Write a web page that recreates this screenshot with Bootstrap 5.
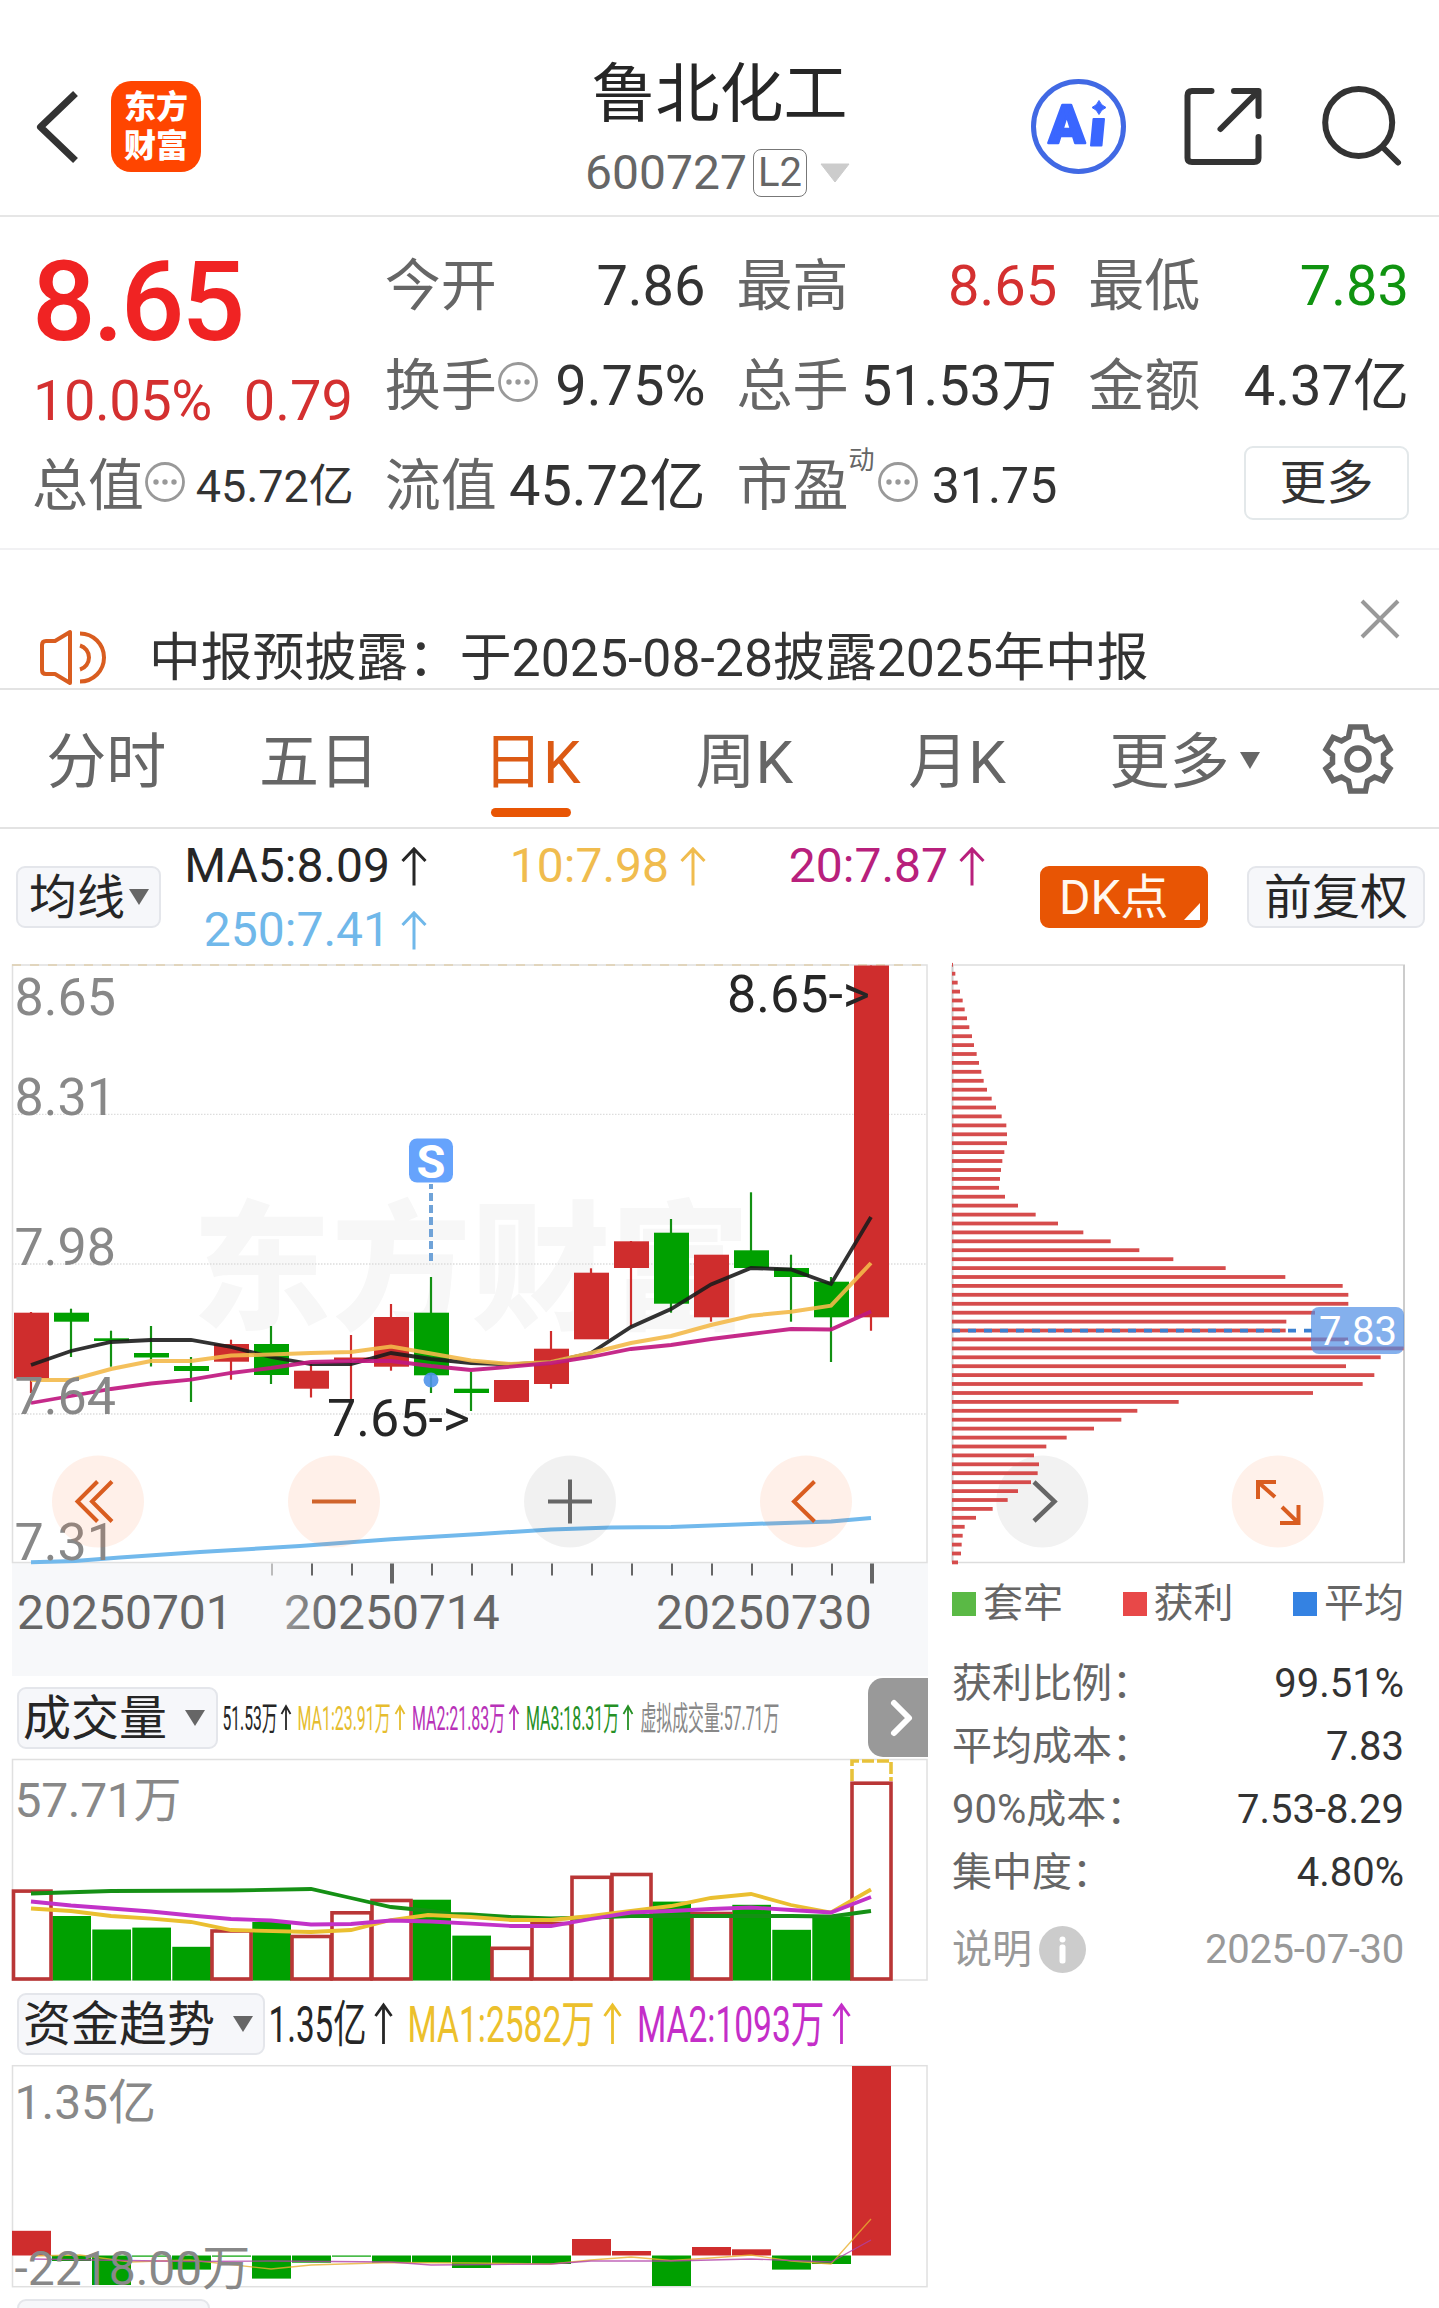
<!DOCTYPE html>
<html lang="zh-CN">
<head>
<meta charset="utf-8">
<meta name="viewport" content="width=device-width, initial-scale=1">
<title>鲁北化工 600727</title>
<link href="https://cdn.jsdelivr.net/npm/bootstrap@5.3.0/dist/css/bootstrap.min.css" rel="stylesheet">
<style>
  :root { --up:#cf2d2d; --down:#00a000; --ink:#333; --dim:#666; --brand:#e85504; }
  body { font-family: Roboto, "Noto Sans CJK SC", sans-serif; color: var(--ink); background:#fff; width:1439px; height:2308px; overflow:hidden; }
  svg { display:block; flex:none; overflow:visible; }
  .topbar { height:217px; padding:38px 38px 0 30px; border-bottom:2px solid #e6e6e6; }
  .topbar .side { flex:1 1 0; }
  .brand-tile { width:90px; height:91px; border-radius:20px; background:#ff4500; color:#fff; font-size:32px; line-height:38.5px; font-weight:900; margin-left:30px; padding-top:7px; text-align:center; }
  .stock-title { font-size:64px; line-height:84px; color:#262626; padding:8px 0 0 8px; }
  .stock-code { font-size:48px; line-height:72px; color:var(--dim); height:72px; padding-left:4px; }
  .lv { font-size:40px; line-height:46px; height:48px; width:54px; border:1.5px solid #777; border-radius:8px; margin:0 13px 0 6px; text-align:center; }
  .quotes { height:333px; padding:19px 31px 0 32px; border-bottom:2px solid #f1f1f3; display:grid; grid-template-columns:repeat(4,1fr); column-gap:32px; align-items:start; }
  .qrow { height:100px; font-size:56px; line-height:101px; white-space:nowrap; }
  .qrow .lb { color:var(--dim); }
  .qrow > span:last-child { margin-right:-1px; }
  .price { font-size:112px; line-height:132px; height:130px; font-weight:500; color:#f02323; letter-spacing:-3px; }
  .chg { font-size:56px; line-height:71px; height:70px; color:#d43030; gap:32px; padding-left:1px; }
  .chg span:first-child { letter-spacing:-.5px; }
  .tip { margin:-9px 0 0 3px; }
  .more-btn { width:165px; height:74px; border:2px solid #e3e8ea; border-radius:9px; font-size:47px; line-height:70px; text-align:center; margin:-6px -1px 0 0; }
  .notice { height:140px; padding:53px 39px 0 38px; border-bottom:2px solid #e3e3e3; font-size:51.8px; line-height:112px; }
  .tabs6 { height:139px; border-bottom:2px solid #e3e3e3; font-size:60px; line-height:145px; color:var(--dim); }
  .tabs6 .tb { width:212.7px; text-align:center; position:relative; }
  .tabs6 .on { color:#dc5a14; }
  .tabs6 .on::after { content:""; position:absolute; left:66px; top:118px; width:80px; height:9px; border-radius:5px; background:var(--brand); }
  .tabs6 .tb-more { width:262px; padding-left:46px; gap:11px; }
  .tabs6 .gear { margin-top:34px; margin-left:-2px; }
  .mabar { height:135px; padding:0 14px 0 16px; font-size:48px; }
  .chip { height:62px; border:2px solid #e4e6eb; border-radius:9px; background:#f6f7fa; color:#262626; font-size:48px; line-height:59px; white-space:nowrap; }
  .mabar .chip { margin-top:37px; }
  .chip-dk { width:168px; background:var(--brand); border-color:var(--brand); color:#fff8f0; position:relative; padding-left:17px; margin-left:16px; }
  .chip-dk::after { content:""; position:absolute; right:6px; bottom:6px; border-style:solid; border-width:0 0 17px 16px; border-color:transparent transparent #fff; }
  .malist { display:grid; grid-template-columns:243px 279px 279px; grid-auto-rows:64px; align-content:start; line-height:64px; width:840px; margin-left:23px; padding-top:5px; }
  .malist .m { display:flex; align-items:center; justify-content:flex-end; gap:11px; height:64px; }
  .plot-l { width:928px; }
  .plot-r { width:511px; padding:0 35px 0 24px; }
  .indbar { padding:0 0 0 17px; }
  .indbar .chip { padding-left:4px; }
  .indbar .chip svg { margin-left:18px; }
  .pager { width:60px; height:79px; background:#999; border-radius:15px 0 0 15px; margin-top:1px; }
  .sw { width:24px; height:24px; margin-right:7px; }
  .legend { font-size:40px; line-height:82px; height:81px; margin-bottom:8px; color:var(--dim); }
  .cost { font-size:40px; line-height:63px; height:63px; }
  .cost .lb { color:var(--dim); }
  .foot { font-size:40px; line-height:91px; height:91px; color:#999; }
  .foot svg { margin-left:7px; }
  text { white-space:pre; }
</style>
</head>
<body>

<header class="topbar d-flex align-items-center">
  <div class="side d-flex align-items-center">
    <svg width="51" height="92" viewBox="31 81 51 92" fill="none" stroke="#333" stroke-width="7" stroke-linejoin="round"><path d="M76.500 93.500 41.500 127 76.500 160.500"/></svg>
    <div class="brand-tile">东方<br>财富</div>
  </div>
  <div class="text-center">
    <div class="stock-title">鲁北化工</div>
    <div class="stock-code d-flex align-items-center justify-content-center">600727<span class="lv">L2</span><svg width="30" height="20"><path d="M1 1H29L15 19Z" fill="#ccc" stroke="#ccc" stroke-linejoin="round"/></svg></div>
  </div>
  <div class="side d-flex align-items-center justify-content-end">
    <svg width="97" height="97" viewBox="1031 78.500 97 97">
      <circle cx="1078.500" cy="127" r="45" fill="none" stroke="#4169e4" stroke-width="5"/>
      <g fill="#3a66ff" stroke="#3a66ff" font-family="Roboto" font-weight="900" stroke-linejoin="round">
        <text x="1048.500" y="143.500" font-size="54" stroke-width="2.500" textLength="36.500" lengthAdjust="spacingAndGlyphs">A</text>
        <path d="M1093.500 119.500H1104L1101.500 146H1091Z" stroke-width="2"/>
        <path d="M1099 101Q1101 106 1106 108Q1101 110 1099 115Q1097 110 1092 108Q1097 106 1099 101Z" stroke-width="1"/>
      </g>
    </svg>
    <svg class="ms-5" width="78" height="78" viewBox="1176 88 78 78" fill="none" stroke="#333" stroke-width="6" stroke-linecap="round" stroke-linejoin="round"><path d="M1211.500 91H1192Q1187.500 91 1187.500 95.500V158Q1187.500 162 1192 162H1254Q1258.500 162 1258.500 158V137M1234 91H1258.500V116M1257 92.500 1220.500 129"/></svg>
    <svg class="ms-5" width="99" height="80" viewBox="1302 87 99 80" fill="none" stroke="#333" stroke-width="6" stroke-linecap="round"><circle cx="1358.700" cy="122.500" r="33.500"/><path d="M1383.500 148 1398 162.500"/></svg>
  </div>
</header>

<section class="quotes">
  <div>
    <div class="price">8.65</div>
    <div class="chg d-flex"><span>10.05%</span><span>0.79</span></div>
    <div class="qrow d-flex align-items-center"><span class="lb">总值</span><svg class="tip ms-0" width="42" height="40"><use href="#dots" x="1"/></svg><span class="ms-auto" style="font-size:45px">45.72亿</span></div>
  </div>
  <div>
    <div class="qrow d-flex justify-content-between"><span class="lb">今开</span><span>7.86</span></div>
    <div class="qrow d-flex align-items-center"><span class="lb">换手</span><svg class="tip ms-0" width="42" height="40"><use href="#dots" x="1"/></svg><span class="ms-auto">9.75%</span></div>
    <div class="qrow d-flex justify-content-between"><span class="lb">流值</span><span>45.72亿</span></div>
  </div>
  <div>
    <div class="qrow d-flex justify-content-between"><span class="lb">最高</span><span style="color:#d43030">8.65</span></div>
    <div class="qrow d-flex justify-content-between"><span class="lb">总手</span><span>51.53万</span></div>
    <div class="qrow d-flex align-items-center"><span class="lb">市盈</span><span class="lb" style="font-size:26px;line-height:26px;margin-top:-52px">动</span><svg class="tip" width="40" height="40"><use href="#dots"/></svg><span class="ms-auto" style="font-size:50px">31.75</span></div>
  </div>
  <div>
    <div class="qrow d-flex justify-content-between"><span class="lb">最低</span><span style="color:#109310">7.83</span></div>
    <div class="qrow d-flex justify-content-between"><span class="lb">金额</span><span>4.37亿</span></div>
    <div class="qrow d-flex align-items-center justify-content-end"><div class="more-btn">更多</div></div>
  </div>
</section>

<section class="notice d-flex">
  <svg width="70" height="58" viewBox="38 628 70 58" style="margin-top:25px" fill="none" stroke="#d95d20" stroke-width="4"><path d="M70 632V683L55 674H46Q42 674 42 670V645Q42 641 46 641H55Z" stroke-linejoin="round"/><path d="M80 645.500A12.500 12.500 0 0 1 80 669.500M80 633.500A24 24 0 0 1 80 681.500"/></svg>
  <span style="margin-left:41px">中报预披露：于2025-08-28披露2025年中报</span>
  <svg class="ms-auto" width="38" height="38" style="margin-top:-3px" fill="none" stroke="#999" stroke-width="4"><path d="M0 1 36 37M36 1 0 37"/></svg>
</section>

<nav class="tabs6 d-flex align-items-start">
  <div class="tb">分时</div><div class="tb">五日</div><div class="tb on">日K</div><div class="tb">周K</div><div class="tb">月K</div>
  <div class="tb-more d-flex align-items-center"><span>更多</span><svg width="20" height="17" class="mb-1"><path d="M0 0H20L10 17Z" fill="#666"/></svg></div>
  <svg class="gear" width="70" height="70" viewBox="-35 -35 70 70" fill="none" stroke="#666" stroke-width="5.500"><path d="M-7.500 -32H7.500L9.500 -22 16.500 -18 25 -21.500 32 -9.500 25.500 -4V4L32 9.500 25 21.500 16.500 18 9.500 22 7.500 32H-7.500L-9.500 22-16.500 18-25 21.500-32 9.500-25.500 4V-4L-32 -9.500-25 -21.500-16.500 -18-9.500 -22Z"/><circle r="11"/></svg>
</nav>

<section class="mabar d-flex">
  <div class="chip d-flex align-items-center" style="width:145px;padding-left:11px">均线<svg width="20" height="16" style="margin-left:4px"><path d="M0 0H20L10 16Z" fill="#666"/></svg></div>
  <div class="malist">
    <div class="m" style="color:#262626">MA5:8.09<svg width="26" height="40"><use href="#up"/></svg></div>
    <div class="m" style="color:#f0bc4e">10:7.98<svg width="26" height="40"><use href="#up"/></svg></div>
    <div class="m" style="color:#b8207c">20:7.87<svg width="26" height="40"><use href="#up"/></svg></div>
    <div class="m" style="color:#70b8ea">250:7.41<svg width="26" height="40"><use href="#up"/></svg></div>
  </div>
  <div class="chip chip-dk">DK点</div>
  <div class="chip ms-auto" style="width:178px;padding-left:15px">前复权</div>
</section>

<main class="d-flex">
  <div class="plot-l">
    <svg id="kline" width="928" height="713" viewBox="0 964 928 713"></svg>
    <div class="indbar d-flex align-items-start" style="height:81px">
      <div class="chip d-flex align-items-center" style="width:201px;margin-top:10px">成交量<svg width="20" height="16"><path d="M0 0H20L10 16Z" fill="#666"/></svg></div>
      <svg width="640" height="81" viewBox="218 1677 640 81" font-size="33">
        <g fill="#262626" color="#262626"><text transform="translate(222.500 1729.500) scale(.475 1)">51.53万</text><path d="M286 1730V1706M281.500 1714 286 1706 290.500 1714" fill="none" stroke="currentColor" stroke-width="1.800"/></g>
        <g fill="#e6bd2e" color="#e6bd2e"><text transform="translate(297.500 1729.500) scale(.483 1)">MA1:23.91万</text><path d="M400 1730V1706M395.500 1714 400 1706 404.500 1714" fill="none" stroke="currentColor" stroke-width="1.800"/></g>
        <g fill="#b832b8" color="#b832b8"><text transform="translate(412 1729.500) scale(.483 1)">MA2:21.83万</text><path d="M514 1730V1706M509.500 1714 514 1706 518.500 1714" fill="none" stroke="currentColor" stroke-width="1.800"/></g>
        <g fill="#259025" color="#259025"><text transform="translate(526 1729.500) scale(.483 1)">MA3:18.31万</text><path d="M628 1730V1706M623.500 1714 628 1706 632.500 1714" fill="none" stroke="currentColor" stroke-width="1.800"/></g>
        <text transform="translate(640.500 1729.500) scale(.481 1)" fill="#888">虚拟成交量:57.71万</text>
      </svg>
      <div class="pager ms-auto d-flex align-items-center justify-content-center"><svg class="ms-2" width="22" height="38" viewBox="0 0 22 38" fill="none" stroke="#fff" stroke-width="6" stroke-linecap="round" stroke-linejoin="round"><path d="M3 4 18 19 3 34"/></svg></div>
    </div>
    <svg id="volume" width="928" height="224" viewBox="0 1758 928 224"></svg>
    <div class="indbar d-flex align-items-start" style="height:82px">
      <div class="chip d-flex align-items-center" style="width:248px;margin-top:11px">资金趋势<svg width="20" height="16"><path d="M0 0H20L10 16Z" fill="#666"/></svg></div>
      <svg width="640" height="82" viewBox="265 1982 640 82" font-size="50">
        <g fill="#262626" color="#262626"><text transform="translate(268.500 2041.500) scale(.665 1)">1.35亿</text><path d="M383.500 2044V2005M375.500 2016 383.500 2005 391.500 2016" fill="none" stroke="currentColor" stroke-width="2.800"/></g>
        <g fill="#ecc02c" color="#ecc02c"><text transform="translate(407.500 2041.500) scale(.671 1)">MA1:2582万</text><path d="M612.500 2044V2005M604.500 2016 612.500 2005 620.500 2016" fill="none" stroke="currentColor" stroke-width="2.800"/></g>
        <g fill="#c42ec8" color="#c42ec8"><text transform="translate(637 2041.500) scale(.671 1)">MA2:1093万</text><path d="M841.500 2044V2005M833.500 2016 841.500 2005 849.500 2016" fill="none" stroke="currentColor" stroke-width="2.800"/></g>
      </svg>
    </div>
    <svg id="flow" width="928" height="224" viewBox="0 2064 928 224"></svg>
    <div class="indbar" style="height:20px;overflow:hidden"><div class="chip" style="width:193px;margin-top:11px"></div></div>
  </div>

  <aside class="plot-r">
    <svg id="chips" width="452" height="599" viewBox="952 964 452 599"></svg>
    <div class="legend d-flex justify-content-between align-items-center">
      <div class="d-flex align-items-center"><i class="sw" style="background:#5ab945"></i>套牢</div>
      <div class="d-flex align-items-center"><i class="sw" style="background:#e84848"></i>获利</div>
      <div class="d-flex align-items-center"><i class="sw" style="background:#3482e2"></i>平均</div>
    </div>
    <div class="cost d-flex justify-content-between"><span class="lb">获利比例：</span><span>99.51%</span></div>
    <div class="cost d-flex justify-content-between"><span class="lb">平均成本：</span><span>7.83</span></div>
    <div class="cost d-flex justify-content-between"><span class="lb">90%成本：</span><span>7.53-8.29</span></div>
    <div class="cost d-flex justify-content-between"><span class="lb">集中度：</span><span>4.80%</span></div>
    <div class="foot d-flex align-items-center"><span>说明</span><svg width="47" height="47"><circle cx="23.500" cy="23.500" r="23.500" fill="#ccc"/><circle cx="23.500" cy="13.500" r="3" fill="#fff"/><rect x="20.500" y="18.500" width="6" height="19" rx="2.500" fill="#fff"/></svg><span class="ms-auto" style="letter-spacing:-.3px">2025-07-30</span></div>
  </aside>
</main>

<svg width="0" height="0" style="position:absolute">
  <symbol id="dots" viewBox="0 0 40 40" width="40" height="40"><circle cx="20" cy="20" r="18.500" fill="none" stroke="#999" stroke-width="2.800"/><g fill="#999"><circle cx="11" cy="20" r="2.700"/><circle cx="20" cy="20" r="2.700"/><circle cx="29" cy="20" r="2.700"/></g></symbol>
  <symbol id="up" viewBox="0 0 26 40"><path d="M13 39.500V3M1.500 15 13 3 24.500 15" fill="none" stroke="currentColor" stroke-width="3"/></symbol>
</svg>

<script src="https://cdn.jsdelivr.net/npm/bootstrap@5.3.0/dist/js/bootstrap.bundle.min.js"></script>
<script>
const UP = '#cf2d2d', DOWN = '#00a000', STEP = 40, X0 = 31;
const line = (pts, color, w, op = 1) => `<polyline points="${pts.map(p => p.join()).join(' ')}" fill="none" stroke="${color}" stroke-width="${w}" stroke-opacity="${op}"/>`;
const series = ys => ys.map((y, i) => [X0 + STEP * i, y]);
const label = (x, y, s, size = 48, fill = '#888', extra = '') => `<text x="${x}" y="${y}" font-size="${size}" fill="${fill}" ${extra}>${s}</text>`;
const frame = (x, y, w, h) => `<rect x="${x}" y="${y}" width="${w}" height="${h}" fill="none" stroke="#e0e0e0" stroke-width="1.5"/>`;

/* candles: direction, body top, body bottom, wick top, wick bottom */
const candles = [
  [1,1312.7,1378.5,1312,1393],[0,1312.7,1321.7,1308.7,1357],[0,1338.3,1341,1330.7,1366.7],[0,1353,1357.5,1326,1366.5],
  [0,1366,1371,1357,1402],[1,1344,1361.7,1339.7,1379.7],[0,1344,1375,1326,1384],[1,1370.7,1388.7,1363,1397.5],
  [1,1357.5,1360,1335,1400],[1,1317,1366.7,1304,1370.7],[0,1312.7,1375.3,1277,1393],[0,1388.7,1393,1371.7,1411],
  [1,1380,1402,1380,1402],[1,1348.7,1384,1331,1388.7],[1,1272.7,1339.3,1268.3,1339],[1,1241.3,1268,1241,1326.7],
  [0,1232.7,1303.7,1219,1312.7],[1,1254.7,1317.3,1255,1321.7],[0,1250.3,1268,1192.3,1268],[0,1268,1277,1254.7,1321.7],
  [0,1281.7,1317.3,1277,1362],[1,965.5,1317.3,965.5,1330.7]];
let k = `<rect x="12" y="1563" width="916" height="113" fill="#f7f8fa"/>` + frame(12.5, 965, 914.5, 597.5);
k += `<text x="192" y="1318" font-size="139" font-weight="900" fill="#f7f7f7" textLength="558">东方财富</text>`;
k += `<path d="M12 965H927" stroke="#e0cfb0" stroke-width="1.500" stroke-dasharray="9 9"/>`;
k += [1114.3,1264,1414].map(y => `<path d="M12 ${y}H927" stroke="#ddd" stroke-width="1.300" stroke-dasharray="1.500 1.500"/>`).join('');
candles.forEach(([u, a, b, t, l], i) => {
  const x = X0 + STEP * i, c = u ? UP : DOWN;
  k += `<path d="M${x} ${t}V${l}" stroke="${u ? UP : '#129012'}" stroke-width="2.200"/><rect x="${x - 17}" y="${a}" width="35" height="${b - a}" fill="${c}"/>`;
});
k += line(series([1365,1351,1342,1340,1340,1347,1357,1364,1364,1353,1359,1363,1364.5,1362,1353,1327,1309,1284.5,1268,1269.5,1284,1217]), '#1c1c1c', 3.8, .9);
k += line(series([1380,1380,1369,1361,1361,1355.5,1354.5,1353,1352,1346.5,1353.5,1360.5,1364,1362,1353,1343,1336,1325,1315.7,1311.7,1305.7,1263]), '#f3b94a', 4, .9);
k += line(series([1403,1396,1389,1383.5,1379.7,1373,1368,1362,1361,1361,1366,1370,1366.7,1363,1357,1349,1345,1339,1334,1329,1329.5,1311.5]), '#c01880', 3.8, .92);
k += line([[31,1562.3],[75,1561],[120,1557.5],[200,1552],[300,1546],[391,1539.3],[480,1534],[551,1529.5],[611,1527.5],[671,1527],[751,1524],[831,1521.5],[871,1518]], '#72b9ec', 4);
k += `<path d="M431 1184V1263" stroke="#70a3d8" stroke-width="4" stroke-dasharray="8 4" stroke-dashoffset="3"/><rect x="409" y="1138.500" width="44" height="44" rx="8" fill="#66a3fc"/>` + label(431, 1177.5, 'S', 47, '#fff', 'font-weight="700" text-anchor="middle"');
k += `<circle cx="431" cy="1380" r="7.500" fill="#4f94ea" fill-opacity=".9"/>`;
k += label(14.5,1014.5,'8.65',52) + label(14.5,1114.5,'8.31',52) + label(14.5,1264.5,'7.98',52) + label(14.5,1414,'7.64',52) + label(14.5,1560,'7.31',52);
k += label(727,1012.3,'8.65-&gt;',52,'#262626') + label(327,1436,'7.65-&gt;',52,'#262626');
const knob = (x, bg, stroke, d) => `<circle cx="${x}" cy="1501.500" r="46" fill="${bg}"/><path d="${d}" fill="none" stroke="${stroke}" stroke-width="4"/>`;
k += knob(98, 'rgba(255,110,40,.1)', '#d95d20', 'M97.500 1481.500 77.500 1501.500 97.500 1521.500M112 1481.500 92 1501.500 112 1521.500');
k += knob(334, 'rgba(255,110,40,.1)', '#d0642c', 'M312 1501.500H356');
k += knob(570, 'rgba(0,0,0,.053)', '#666', 'M548 1501.500H592M570 1479.500V1523.500');
k += knob(806, 'rgba(255,110,40,.1)', '#d95d20', 'M814.500 1481.500 794 1501.500 814.500 1521.500');
for (let x = 272; x <= 872; x += 40) {
  const big = x === 392 || x === 872;
  k += `<rect x="${x - (big ? 2 : 1)}" y="1563.500" width="${big ? 4 : 2}" height="${big ? 20 : 12}" fill="${x === 272 ? '#bbb' : '#666'}"/>`;
}
k += `<linearGradient id="fade" gradientUnits="userSpaceOnUse" x1="284" y1="0" x2="330" y2="0"><stop offset="0" stop-color="#999"/><stop offset="1" stop-color="#666"/></linearGradient>`;
k += label(17,1629,'20250701',48,'#666') + label(284,1629,'20250714',48,'url(#fade)') + label(656,1629,'20250730',48,'#666');
document.getElementById('kline').innerHTML = k;

/* volume bars: direction, top */
const vol = [[1,1889.6],[0,1916],[0,1929.5],[0,1927.6],[0,1946.8],[1,1929.5],[0,1922],[1,1935],[1,1911.3],[1,1899],[0,1899.7],[0,1935.6],[1,1946.8],[1,1922],[1,1875.8],[1,1873],[0,1901.6],[1,1912],[0,1904.8],[0,1929.8],[0,1916.4],[1,1781.7]];
let v = frame(12.5, 1759.5, 914.5, 220.5);
vol.forEach(([u, t], i) => { if (!u) v += `<rect x="${12.3 + 40 * i}" y="${t}" width="38.700" height="${1980.500 - t}" fill="${DOWN}"/>`; });
vol.forEach(([u, t], i) => {
  if (!u) return;
  const x = i ? 12 + 40 * i : 13.5;
  v += `<rect x="${x}" y="${t + 1.5}" width="${51 + 40 * i - x}" height="${1977.500 - t}" fill="#fff" stroke="#b93636" stroke-width="3.600"/>`;
});
v += `<path d="M852 1781V1761H891V1781" fill="none" stroke="#e8c23a" stroke-width="3.600" stroke-dasharray="12 3"/>`;
v += line([[31,1893.5],[111,1891],[231,1890.5],[311,1889],[351,1898],[391,1907],[431,1911],[451,1914],[471,1914.5],[511,1917],[551,1918.5],[591,1917.5],[631,1916],[791,1916],[831,1916.5],[871,1911]], '#159015', 3.8);
v += line([[31,1908.5],[71,1911],[111,1916],[151,1918.7],[191,1922],[231,1930],[311,1932],[351,1930],[391,1920],[428,1915],[471,1917],[511,1920],[551,1920],[591,1916],[631,1911],[671,1906],[711,1898],[751,1894],[791,1905],[831,1912.5],[871,1889.5]], '#eabf30', 3.8);
v += line([[31,1901.5],[71,1905.5],[151,1911.5],[191,1915.5],[231,1919],[271,1920.5],[311,1924.5],[351,1924],[391,1920.5],[431,1921.5],[471,1923.7],[511,1926],[551,1926],[591,1919],[631,1912.5],[671,1911],[711,1909],[751,1907.5],[791,1910],[831,1912.5],[871,1897]], '#c232c8', 3.8);
v += label(14.5, 1817, '57.71万', 48, '#888', 'textLength="167"');
document.getElementById('volume').innerHTML = v;

/* capital flow: far edge of each bar measured from the zero line */
const zero = 2255.5;
const flow = [2230.8,2261,2285,2256.7,2269.6,2256.7,2278.6,2262.7,2256.7,2262.7,2262.7,2268,2263.5,2264,2239,2251,2286,2247,2249.3,2269.6,2264,2066];
let f = frame(12.5, 2065.7, 914.5, 221);
flow.forEach((y, i) => { f += `<rect x="${12 + 40 * i}" y="${Math.min(y, zero)}" width="39" height="${Math.abs(y - zero)}" fill="${y < zero ? UP : DOWN}"/>`; });
f += line([[31,2256],[80,2255],[130,2262],[190,2260],[271,2269],[311,2265],[391,2262.5],[471,2263],[551,2264],[591,2260],[631,2257],[671,2260.5],[711,2258],[751,2255],[791,2261],[831,2264],[871,2219]], '#e8b030', 1.3, .8);
f += line([[31,2259],[191,2261.5],[271,2261],[391,2262],[431,2265],[551,2264],[591,2261],[671,2261],[711,2260],[751,2259],[831,2262],[871,2240]], '#b040a8', 1.3, .8);
f += label(14.5, 2118.5, '1.35亿') + label(14.5, 2285, '-2218.00万');
document.getElementById('flow').innerHTML = f;

/* cost distribution: bar lengths in thirds of a pixel, top to bottom */
const dist = [3,10,17,24,32,38,45,52,60,66,74,81,88,95,105,119,132,149,163,165,165,157,151,147,144,141,159,198,251,318,394,476,562,664,821,1000,1172,1189,1189,1089,1003,1001,1188,1355,1286,1182,1267,1232,1083,680,556,508,426,344,283,246,261,257,237,198,167,122,72,38,32,29,27,18];
let d = `<path d="M952 965H1405M952 1562.500H1405" stroke="#ddd" stroke-width="1.500"/><path d="M1404 965V1562.500M952.500 965V1562.500" stroke="#ccc" stroke-width="2"/>`;
d += knob(1042.3, '#f2f2f2', 'none', '');
dist.forEach((w, i) => { d += `<rect x="952" y="${(964.8 + 8.92 * i - 1.9).toFixed(1)}" width="${w / 3}" height="3.800" fill="#d64c4c"/>`; });
d += `<path d="M952 1330.700H1312" stroke="#3b80d0" stroke-width="3.800" stroke-dasharray="8 8"/>`;
d += `<path d="M1034 1482 1054.500 1501.500 1034 1521" fill="none" stroke="#666" stroke-width="4.500"/>`;
d += knob(1277.7, '#fff1ea', '#d95d20', 'M1276 1482H1258V1499M1258 1482 1275 1497M1280 1523H1298.500V1505M1298.500 1523 1282 1507');
d += `<rect x="1311" y="1307" width="93" height="47" rx="8" fill="#508ee6" fill-opacity=".7"/>` + label(1319, 1344.5, '7.83', 40, '#fff');
document.getElementById('chips').innerHTML = d;
</script>
</body>
</html>
